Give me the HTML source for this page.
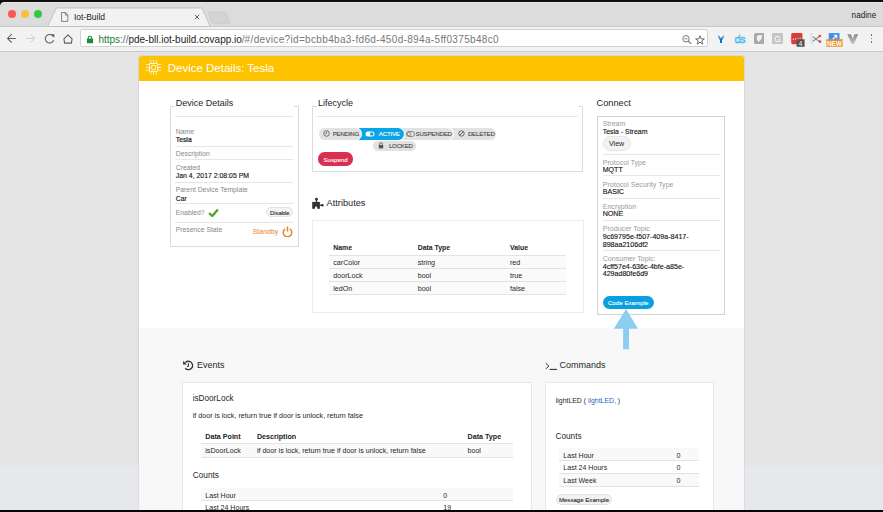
<!DOCTYPE html><html><head><meta charset="utf-8"><style>
html,body{margin:0;padding:0;width:883px;height:512px;overflow:hidden;background:#e4e4e4}
body{position:relative;font-family:"Liberation Sans",sans-serif}
body>div,body>svg{position:absolute}
.t{white-space:nowrap}
</style></head><body>
<div style="left:0px;top:0px;width:883px;height:512px;background:#e4e4e4"></div>
<div style="left:0px;top:0px;width:883px;height:27px;background:#dcdcdc"></div>
<div style="left:0px;top:0px;width:883px;height:1.7px;background:#0f0f0f"></div>
<div style="left:0px;top:1.7px;width:883px;height:1.4px;background:#e6e6e6"></div>
<div style="left:0px;top:1.7px;width:3px;height:3px;background:radial-gradient(circle at 3px 3px, transparent 2.2px, #0f0f0f 3px)"></div>
<div style="left:7.6px;top:10.200000000000001px;width:8.2px;height:8.2px;border-radius:50%;background:#fc5753"></div>
<div style="left:20.9px;top:10.200000000000001px;width:8.2px;height:8.2px;border-radius:50%;background:#fdbc40"></div>
<div style="left:34.0px;top:10.200000000000001px;width:8.2px;height:8.2px;border-radius:50%;background:#33c748"></div>
<svg style="left:0px;top:0px" width="883" height="30" viewBox="0 0 883 30"><path d="M47.6 26.5 L56.2 8.5 Q56.8 8 57.5 8 L201 8 Q201.8 8 202.2 8.6 L210.3 26.5 Z" fill="#f2f2f2" stroke="#b9b9b9" stroke-width="0.8"/><path d="M209.5 26.4 L883 26.4" stroke="#c3c3c3" stroke-width="0.8"/><path d="M0 26.4 L47.8 26.4" stroke="#c3c3c3" stroke-width="0.8"/><path d="M208.3 12.6 Q208 12.2 208.8 12.2 L225 12.2 Q226 12.2 226.4 13 L229.8 22.6 Q230 23.7 229 23.7 L213 23.7 Q212.2 23.7 211.8 23 Z" fill="#d3d3d3" stroke="#c6c6c6" stroke-width="0.6"/></svg>
<div style="left:0px;top:26.8px;width:883px;height:24.2px;background:#f2f2f2"></div>
<div style="left:0px;top:51px;width:883px;height:1px;background:#c9c9c9"></div>
<svg style="left:60.5px;top:12px" width="8" height="10" viewBox="0 0 8 10"><path d="M0.5 0.5 H4.5 L6.8 2.8 V9.4 H0.5 Z M4.3 0.5 V3 H6.8" fill="none" stroke="#707070" stroke-width="0.85"/></svg>
<div class="t" style="left:73.9px;top:13.00px;font-size:8.5px;line-height:8.5px;color:#222;font-weight:400;">Iot-Build</div>
<svg style="left:193.5px;top:14px" width="6" height="6" viewBox="0 0 6 6"><path d="M0.8 0.8 L5.2 5.2 M5.2 0.8 L0.8 5.2" stroke="#5a5a5a" stroke-width="0.95"/></svg>
<svg style="left:6px;top:33px" width="11" height="11" viewBox="0 0 11 11"><path d="M1.5 5.4 H9.8 M5.7 1.1 L1.5 5.4 L5.7 9.7" fill="none" stroke="#5e5e5e" stroke-width="1.05"/></svg>
<svg style="left:25px;top:33px" width="11" height="11" viewBox="0 0 11 11"><path d="M1 5.4 H9.6 M5.3 1.1 L9.6 5.4 L5.3 9.7" fill="none" stroke="#cfcfcf" stroke-width="1"/></svg>
<svg style="left:44px;top:33px" width="12" height="12" viewBox="0 0 12 12"><path d="M9.3 3.6 A4.3 4.3 0 1 0 9.6 7.2" fill="none" stroke="#5c5c5c" stroke-width="1.05"/><path d="M6.9 1.3 L10.3 1.3 L10.3 4.7 Z" fill="#5c5c5c"/></svg>
<svg style="left:62px;top:33px" width="12" height="12" viewBox="0 0 12 12"><path d="M6 1.8 L10.1 5.9 L9.4 10.1 H2.6 L1.9 5.9 Z" fill="none" stroke="#5c5c5c" stroke-width="1.05" stroke-linejoin="round"/></svg>
<div style="left:80px;top:29px;width:628px;height:18px;background:#fff;border:1px solid #d0d0d0;border-radius:2.5px;box-sizing:border-box"></div>
<svg style="left:85.5px;top:34.5px" width="8" height="9" viewBox="0 0 8 9"><path d="M2.3 3.8 V2.9 A1.7 1.7 0 0 1 5.7 2.9 V3.8" fill="none" stroke="#1e8a3c" stroke-width="1.1"/><rect x="0.9" y="3.6" width="6.2" height="4.6" rx="0.6" fill="#1e8a3c"/></svg>
<div class="t" style="left:98.4px;top:35.00px;font-size:10px;line-height:10px;color:#333;font-weight:400;"><span style="color:#188038">https</span><span style="color:#666">://</span><span style="color:#222">pde-bll.iot-build.covapp.io</span><span style="color:#777">/</span><span style="color:#777;letter-spacing:0.34px">#/device?id=bcbb4ba3-fd6d-450d-894a-5ff0375b48c0</span></div>
<svg style="left:681.5px;top:35px" width="10" height="9" viewBox="0 0 10 9"><circle cx="4" cy="3.8" r="3.2" fill="none" stroke="#6a6a6a" stroke-width="0.9"/><path d="M2.4 3.8 H5.6" stroke="#6a6a6a" stroke-width="0.8"/><path d="M6.3 6.1 L9.2 8.8" stroke="#6a6a6a" stroke-width="1.1"/></svg>
<svg style="left:695px;top:34.5px" width="10" height="10" viewBox="0 0 10 10"><path d="M5 0.8 L6.2 3.9 L9.4 3.9 L6.8 5.9 L7.8 9.1 L5 7.2 L2.2 9.1 L3.2 5.9 L0.6 3.9 L3.8 3.9 Z" fill="none" stroke="#5a5a5a" stroke-width="0.9" stroke-linejoin="round"/></svg>
<div class="t" style="left:851.6px;top:12.00px;font-size:8.2px;line-height:8.2px;color:#222;font-weight:400;">nadine</div>
<svg style="left:716px;top:33.5px" width="10" height="10" viewBox="0 0 10 10"><path d="M0.5 1.2 Q5 -0.3 9.5 1.2 L6.4 6.8 V9.6 H3.6 V6.8 Z" fill="#fff"/><defs><linearGradient id="gvb" x1="0" y1="0" x2="0" y2="1"><stop offset="0" stop-color="#7cc4f4"/><stop offset="0.45" stop-color="#1a73c8"/><stop offset="1" stop-color="#0d4f9a"/></linearGradient></defs><path d="M1.2 1.6 L3.6 1.6 L5 4.6 L6.4 1.6 L8.8 1.6 L5.9 6.6 V9 H4.1 V6.6 Z" fill="url(#gvb)"/></svg>
<svg style="left:734px;top:33.5px" width="12" height="10" viewBox="0 0 12 10"><text x="0.4" y="9" font-family="Liberation Sans" font-size="11" letter-spacing="-0.6" fill="none" stroke="#22b0ee" stroke-width="0.55">ds</text></svg>
<svg style="left:753.5px;top:33px" width="10.5" height="11" viewBox="0 0 10.5 11"><rect x="0" y="0" width="10.5" height="11" rx="1.6" fill="#a9a9a9"/><path d="M2.6 3.4 Q5.6 1.4 8.2 2.3 Q8.3 6.6 4.6 9.1 Q2.4 7 2.6 3.4 Z" fill="#f0f0f0"/></svg>
<svg style="left:772px;top:33px" width="11" height="11" viewBox="0 0 11 11"><rect x="0" y="0" width="11" height="11" rx="0.8" fill="#c5c5c5"/><text x="5.5" y="8.9" font-family="Liberation Sans" font-size="8.6" fill="#fff" text-anchor="middle">G</text></svg>
<svg style="left:790.5px;top:33px" width="15" height="14.5" viewBox="0 0 15 14.5"><rect x="0.2" y="0" width="11.2" height="11.2" rx="1.4" fill="#e0393a"/><path d="M2 6.4 H3 M4.2 5.8 H5.2 M6.4 6.2 H7.4 M8.6 5.4 H9.6" stroke="#fff" stroke-width="1.2"/><rect x="5.6" y="6.3" width="8" height="7.5" fill="#545454"/><text x="9.6" y="12.6" font-family="Liberation Sans" font-size="6.4" fill="#fff" text-anchor="middle">4</text></svg>
<svg style="left:809.5px;top:33px" width="12" height="11" viewBox="0 0 12 11"><path d="M3.6 0.6 H1.1 V10.4 H3.6" fill="none" stroke="#d3e3ec" stroke-width="1.3"/><path d="M2.6 3.6 L9.2 8.4 M2.6 8.4 L9.2 3.6" stroke="#7c7c7c" stroke-width="1.1"/><circle cx="9.8" cy="3" r="1.3" fill="#c24a48"/><circle cx="10" cy="8.6" r="1.3" fill="#c24a48"/></svg>
<svg style="left:825.5px;top:33px" width="17" height="14" viewBox="0 0 17 14"><rect x="2.7" y="0.1" width="10.8" height="7" fill="#3e8eec"/><path d="M6.5 6.5 L10.5 2.5 M7.8 2.3 H10.7 V5.2" fill="none" stroke="#fff" stroke-width="1.1"/><rect x="0.3" y="6.2" width="16.3" height="7.6" fill="#e8912d"/><text x="8.45" y="12.5" font-family="Liberation Sans" font-size="6.4" font-weight="700" fill="#fff" text-anchor="middle">NEW</text></svg>
<svg style="left:847px;top:33.5px" width="11.5" height="10.5" viewBox="0 0 11.5 10.5"><defs><linearGradient id="gv" x1="0" y1="0" x2="0" y2="1"><stop offset="0" stop-color="#8a8a8a"/><stop offset="1" stop-color="#c8c8c8"/></linearGradient></defs><path d="M0.3 0.3 H4 L5.75 4.5 L7.5 0.3 H11.2 L6.8 10.2 H4.7 Z" fill="url(#gv)"/></svg>
<div style="left:870.6px;top:33.949999999999996px;width:1.7px;height:1.7px;border-radius:50%;background:#555"></div>
<div style="left:870.6px;top:37.65px;width:1.7px;height:1.7px;border-radius:50%;background:#555"></div>
<div style="left:870.6px;top:41.449999999999996px;width:1.7px;height:1.7px;border-radius:50%;background:#555"></div>
<div style="left:0px;top:465px;width:139px;height:47px;background:#e7e8eb"></div>
<div style="left:744px;top:465px;width:139px;height:47px;background:#e7e8eb"></div>
<div style="left:139px;top:55.5px;width:605px;height:460px;background:#f8f8f8;border-radius:3px 3px 0 0;box-shadow:0 0 1.5px rgba(0,0,0,0.28)"></div>
<div style="left:139px;top:80.5px;width:605px;height:247px;background:#fff"></div>
<div style="left:139px;top:55.5px;width:605px;height:25px;background:#fdc300;border-radius:3px 3px 0 0"></div>
<svg style="left:144px;top:57px" width="20" height="21" viewBox="0 0 20 21"><rect x="5.5" y="6.5" width="8.2" height="7.9" rx="0.6" fill="none" stroke="#fff" stroke-width="0.9"/><circle cx="9.6" cy="10.45" r="2.3" fill="none" stroke="#fff" stroke-width="0.9"/><path d="M6.8 2.9 V6.1 M9.5 2.9 V6.1 M12.3 2.9 V6.1 M6.8 14.8 V18 M9.5 14.8 V18 M12.3 14.8 V18 M1.8 7.6 H5.1 M1.8 10.5 H5.1 M1.8 13.3 H5.1 M14.1 7.6 H17.4 M14.1 10.5 H17.4 M14.1 13.3 H17.4" stroke="#fff" stroke-width="0.8" opacity="0.9"/></svg>
<div class="t" style="left:167.7px;top:63.00px;font-size:11.5px;line-height:11.5px;color:#fff;font-weight:400;">Device Details: Tesla</div>
<div class="t" style="left:175.8px;top:99.00px;font-size:9px;line-height:9px;color:#262626;font-weight:400;">Device Details</div>
<div style="left:170px;top:107px;width:129px;height:140px;border:1px solid #dcdcdc;border-top:none;box-sizing:border-box"></div>
<div style="left:170px;top:106px;width:5px;height:1px;background:#dcdcdc"></div>
<div style="left:294px;top:106px;width:5px;height:1px;background:#dcdcdc"></div>
<div style="left:175px;top:116px;width:118px;height:1px;background:#e6e6e6"></div>
<div style="left:175px;top:146px;width:118px;height:1px;background:#e6e6e6"></div>
<div style="left:175px;top:159px;width:118px;height:1px;background:#e6e6e6"></div>
<div style="left:175px;top:182px;width:118px;height:1px;background:#e6e6e6"></div>
<div style="left:175px;top:203px;width:118px;height:1px;background:#e6e6e6"></div>
<div style="left:175px;top:222px;width:118px;height:1px;background:#e6e6e6"></div>
<div class="t" style="left:175.8px;top:129.00px;font-size:6.8px;line-height:6.8px;color:#888;font-weight:400;">Name</div>
<div class="t" style="left:175.8px;top:137.00px;font-size:6.8px;line-height:6.8px;color:#111;font-weight:400;-webkit-text-stroke:0.2px #1a1a1a">Tesla</div>
<div class="t" style="left:175.8px;top:151.00px;font-size:6.8px;line-height:6.8px;color:#888;font-weight:400;">Description</div>
<div class="t" style="left:175.8px;top:165.00px;font-size:6.8px;line-height:6.8px;color:#888;font-weight:400;">Created</div>
<div class="t" style="left:175.8px;top:173.00px;font-size:6.9px;line-height:6.9px;color:#111;font-weight:400;-webkit-text-stroke:0.12px #111">Jan 4, 2017 2:08:05 PM</div>
<div class="t" style="left:175.8px;top:187.00px;font-size:6.8px;line-height:6.8px;color:#888;font-weight:400;">Parent Device Template</div>
<div class="t" style="left:175.8px;top:196.00px;font-size:6.9px;line-height:6.9px;color:#111;font-weight:400;-webkit-text-stroke:0.12px #111">Car</div>
<div class="t" style="left:175.8px;top:210.00px;font-size:6.8px;line-height:6.8px;color:#888;font-weight:400;">Enabled?</div>
<svg style="left:207.5px;top:207.8px" width="11" height="9" viewBox="0 0 11 9"><path d="M1.1 5 L4.3 8 L9.9 1.6" fill="none" stroke="#5a9e1c" stroke-width="2.3"/></svg>
<div style="left:265.5px;top:207.4px;width:27px;height:9.8px;background:#f3f3f3;border:0.8px solid #e2e2e2;border-radius:5px;box-sizing:border-box"></div>
<div class="t" style="left:269.9px;top:211.00px;font-size:5.9px;line-height:5.9px;color:#262626;font-weight:400;-webkit-text-stroke:0.1px #262626">Disable</div>
<div class="t" style="left:175.8px;top:227.00px;font-size:6.8px;line-height:6.8px;color:#888;font-weight:400;">Presence State</div>
<div class="t" style="left:252.7px;top:228.00px;font-size:7px;line-height:7px;color:#e8832a;font-weight:400;">Standby</div>
<svg style="left:281.5px;top:225.5px" width="11" height="11" viewBox="0 0 11 11"><path d="M3.2 2.8 A4.3 4.3 0 1 0 7.8 2.8" fill="none" stroke="#e8832a" stroke-width="1.5"/><path d="M5.5 0.5 V5.6" stroke="#e8832a" stroke-width="1.5"/></svg>
<div class="t" style="left:318.1px;top:99.00px;font-size:9px;line-height:9px;color:#262626;font-weight:400;">Lifecycle</div>
<div style="left:312px;top:107px;width:271px;height:65px;border:1px solid #dcdcdc;border-top:none;box-sizing:border-box"></div>
<div style="left:312px;top:106px;width:5px;height:1px;background:#dcdcdc"></div>
<div style="left:578px;top:106px;width:5px;height:1px;background:#dcdcdc"></div>
<div style="left:317px;top:116px;width:261px;height:1px;background:#e6e6e6"></div>
<div style="left:449px;top:126.8px;width:48px;height:13.8px;background:#e2e2e2;border-radius:0 6.9px 6.9px 0;border:1px solid #fff;border-left:none;box-sizing:border-box"></div>
<div style="left:400px;top:126.8px;width:53.5px;height:13.8px;background:#e2e2e2;border-radius:0 6.9px 6.9px 0;border:1px solid #fff;border-left:none;box-sizing:border-box"></div>
<div style="left:357.5px;top:126.8px;width:47.5px;height:13.8px;background:#0aa5e6;border-radius:0 6.9px 6.9px 0;border:1px solid #fff;border-left:none;box-sizing:border-box"></div>
<div style="left:318px;top:126.8px;width:44px;height:13.8px;background:#e2e2e2;border-radius:6.9px;border:1px solid #fff;box-sizing:border-box"></div>
<div style="left:372px;top:140px;width:44.5px;height:11.5px;background:#e2e2e2;border-radius:6.9px;border:1px solid #fff;box-sizing:border-box"></div>
<div class="t" style="left:332.7px;top:131.00px;font-size:6.2px;line-height:6.2px;color:#4a4a4a;font-weight:400;letter-spacing:-0.25px;-webkit-text-stroke:0.12px #4a4a4a">PENDING</div>
<div class="t" style="left:378.8px;top:131.00px;font-size:6.2px;line-height:6.2px;color:#fff;font-weight:400;letter-spacing:-0.25px;-webkit-text-stroke:0.12px #fff">ACTIVE</div>
<div class="t" style="left:415.5px;top:131.00px;font-size:6.2px;line-height:6.2px;color:#4a4a4a;font-weight:400;letter-spacing:-0.25px;-webkit-text-stroke:0.12px #4a4a4a">SUSPENDED</div>
<div class="t" style="left:467.9px;top:131.00px;font-size:6.2px;line-height:6.2px;color:#4a4a4a;font-weight:400;letter-spacing:-0.25px;-webkit-text-stroke:0.12px #4a4a4a">DELETED</div>
<div class="t" style="left:388.9px;top:143.00px;font-size:6.2px;line-height:6.2px;color:#4a4a4a;font-weight:400;letter-spacing:-0.25px;-webkit-text-stroke:0.12px #4a4a4a">LOCKED</div>
<svg style="left:322.5px;top:129.8px" width="7" height="7" viewBox="0 0 7 7"><circle cx="3.5" cy="3.5" r="2.8" fill="none" stroke="#555" stroke-width="0.8"/><path d="M3.5 1.8 V3.6 H2.2" fill="none" stroke="#555" stroke-width="0.7"/></svg>
<svg style="left:365px;top:130.6px" width="10" height="6" viewBox="0 0 10 6"><rect x="0.5" y="0.5" width="9" height="5" rx="2.5" fill="#fff"/><circle cx="6.8" cy="3" r="1.8" fill="#0aa5e6"/></svg>
<svg style="left:405.8px;top:130.6px" width="9" height="6" viewBox="0 0 9 6"><rect x="0.5" y="0.5" width="8" height="5" rx="2.5" fill="none" stroke="#666" stroke-width="0.7"/><circle cx="3" cy="3" r="1.8" fill="none" stroke="#666" stroke-width="0.6"/></svg>
<svg style="left:457.8px;top:129.8px" width="7" height="7" viewBox="0 0 7 7"><circle cx="3.5" cy="3.5" r="2.7" fill="none" stroke="#555" stroke-width="0.9"/><path d="M1.8 5.2 L5.2 1.8" stroke="#555" stroke-width="0.9"/></svg>
<svg style="left:377.5px;top:142px" width="6" height="7" viewBox="0 0 6 7"><path d="M1.5 3 V2.2 A1.5 1.5 0 0 1 4.5 2.2 V3" fill="none" stroke="#555" stroke-width="0.8"/><rect x="0.8" y="3" width="4.4" height="3.4" fill="#555"/></svg>
<div style="left:318px;top:152.4px;width:35.1px;height:13.3px;background:#d8304e;border-radius:6.65px"></div>
<div class="t" style="left:323.5px;top:157.00px;font-size:6.1px;line-height:6.1px;color:#fff;font-weight:400;-webkit-text-stroke:0.1px #fff">Suspend</div>
<svg style="left:308px;top:194px" width="24" height="18" viewBox="0 0 24 18"><rect x="4.2" y="7.9" width="7.7" height="6.9" fill="#333"/><rect x="7.8" y="5.5" width="1.3" height="3" fill="#333"/><circle cx="8.45" cy="5.2" r="1.4" fill="#333"/><rect x="11.5" y="10.6" width="2.4" height="1.3" fill="#333"/><circle cx="14.4" cy="11.25" r="1.2" fill="#333"/><ellipse cx="8.1" cy="14.9" rx="1.25" ry="2.7" fill="#fff"/></svg>
<div class="t" style="left:326.6px;top:199.00px;font-size:9.2px;line-height:9.2px;color:#262626;font-weight:400;">Attributes</div>
<div style="left:312px;top:220px;width:272px;height:93px;border:1px solid #ebebeb;box-sizing:border-box"></div>
<div class="t" style="left:333.3px;top:245.00px;font-size:6.9px;line-height:6.9px;color:#222;font-weight:700;">Name</div>
<div class="t" style="left:417.7px;top:245.00px;font-size:6.9px;line-height:6.9px;color:#222;font-weight:700;">Data Type</div>
<div class="t" style="left:510px;top:245.00px;font-size:6.9px;line-height:6.9px;color:#222;font-weight:700;">Value</div>
<div style="left:328.6px;top:255px;width:237.6px;height:39px;background:#fafafa"></div>
<div style="left:328.6px;top:255px;width:237.6px;height:1px;background:#e3e3e3"></div>
<div style="left:328.6px;top:268px;width:237.6px;height:1px;background:#e3e3e3"></div>
<div style="left:328.6px;top:281px;width:237.6px;height:1px;background:#e3e3e3"></div>
<div style="left:328.6px;top:294px;width:237.6px;height:1px;background:#e3e3e3"></div>
<div class="t" style="left:333.3px;top:260.00px;font-size:7.1px;line-height:7.1px;color:#262626;font-weight:400;">carColor</div>
<div class="t" style="left:417.7px;top:260.00px;font-size:7.1px;line-height:7.1px;color:#262626;font-weight:400;">string</div>
<div class="t" style="left:510px;top:260.00px;font-size:7.1px;line-height:7.1px;color:#262626;font-weight:400;">red</div>
<div class="t" style="left:333.3px;top:273.00px;font-size:7.1px;line-height:7.1px;color:#262626;font-weight:400;">doorLock</div>
<div class="t" style="left:417.7px;top:273.00px;font-size:7.1px;line-height:7.1px;color:#262626;font-weight:400;">bool</div>
<div class="t" style="left:510px;top:273.00px;font-size:7.1px;line-height:7.1px;color:#262626;font-weight:400;">true</div>
<div class="t" style="left:333.3px;top:286.00px;font-size:7.1px;line-height:7.1px;color:#262626;font-weight:400;">ledOn</div>
<div class="t" style="left:417.7px;top:286.00px;font-size:7.1px;line-height:7.1px;color:#262626;font-weight:400;">bool</div>
<div class="t" style="left:510px;top:286.00px;font-size:7.1px;line-height:7.1px;color:#262626;font-weight:400;">false</div>
<div class="t" style="left:596.6px;top:99.00px;font-size:9.2px;line-height:9.2px;color:#262626;font-weight:400;">Connect</div>
<div style="left:597px;top:116px;width:128px;height:199px;border:1px solid #d2d2d2;box-sizing:border-box"></div>
<div class="t" style="left:602.7px;top:120.00px;font-size:7px;line-height:7px;color:#9a9a9a;font-weight:400;">Stream</div>
<div class="t" style="left:602.7px;top:129.00px;font-size:6.95px;line-height:6.95px;color:#111;font-weight:400;-webkit-text-stroke:0.12px #111">Tesla - Stream</div>
<div style="left:602.7px;top:136.3px;width:28.2px;height:14.6px;background:#f2f2f2;border:0.8px solid #e6e6e6;border-radius:7.3px;box-sizing:border-box"></div>
<div class="t" style="left:609px;top:141.00px;font-size:7.1px;line-height:7.1px;color:#262626;font-weight:400;">View</div>
<div style="left:602.7px;top:154px;width:117.6px;height:1px;background:#e6e6e6"></div>
<div style="left:602.7px;top:175px;width:117.6px;height:1px;background:#e6e6e6"></div>
<div style="left:602.7px;top:198px;width:117.6px;height:1px;background:#e6e6e6"></div>
<div style="left:602.7px;top:220px;width:117.6px;height:1px;background:#e6e6e6"></div>
<div style="left:602.7px;top:250px;width:117.6px;height:1px;background:#e6e6e6"></div>
<div class="t" style="left:602.7px;top:160.00px;font-size:7.1px;line-height:7.1px;color:#9a9a9a;font-weight:400;">Protocol Type</div>
<div class="t" style="left:602.7px;top:167.00px;font-size:7.1px;line-height:7.1px;color:#111;font-weight:400;-webkit-text-stroke:0.12px #111">MQTT</div>
<div class="t" style="left:602.7px;top:182.00px;font-size:7.1px;line-height:7.1px;color:#9a9a9a;font-weight:400;">Protocol Security Type</div>
<div class="t" style="left:602.7px;top:189.00px;font-size:7.1px;line-height:7.1px;color:#111;font-weight:400;-webkit-text-stroke:0.12px #111">BASIC</div>
<div class="t" style="left:602.7px;top:204.00px;font-size:7.1px;line-height:7.1px;color:#9a9a9a;font-weight:400;">Encryption</div>
<div class="t" style="left:602.7px;top:211.00px;font-size:7.1px;line-height:7.1px;color:#111;font-weight:400;-webkit-text-stroke:0.12px #111">NONE</div>
<div class="t" style="left:602.7px;top:226.00px;font-size:7.1px;line-height:7.1px;color:#9a9a9a;font-weight:400;">Producer Topic</div>
<div class="t" style="left:602.7px;top:234.00px;font-size:7.1px;line-height:7.1px;color:#111;font-weight:400;-webkit-text-stroke:0.12px #111">9c69795e-f507-409a-8417-</div>
<div class="t" style="left:602.7px;top:256.00px;font-size:7.1px;line-height:7.1px;color:#9a9a9a;font-weight:400;">Consumer Topic:</div>
<div class="t" style="left:602.7px;top:264.00px;font-size:7.1px;line-height:7.1px;color:#111;font-weight:400;-webkit-text-stroke:0.12px #111">4cff57e4-636c-4bfe-a85e-</div>
<div class="t" style="left:602.7px;top:242.00px;font-size:7.1px;line-height:7.1px;color:#111;font-weight:400;-webkit-text-stroke:0.12px #111">898aa2106df2</div>
<div class="t" style="left:602.7px;top:271.00px;font-size:7.1px;line-height:7.1px;color:#111;font-weight:400;-webkit-text-stroke:0.12px #111">429ad80fe6d9</div>
<div style="left:602.6px;top:295.5px;width:51.3px;height:13.4px;background:#0aa0e0;border-radius:6.7px"></div>
<div class="t" style="left:607.9px;top:300.00px;font-size:6.2px;line-height:6.2px;color:#fff;font-weight:400;-webkit-text-stroke:0.1px #fff">Code Example</div>
<svg style="left:612px;top:308px" width="28" height="42" viewBox="0 0 28 42"><path d="M14 1 L26.1 20.7 L17 20.7 L17 41.2 L11.1 41.2 L11.1 20.7 L1.8 20.7 Z" fill="#8dcdf0"/></svg>
<svg style="left:180px;top:356px" width="20" height="18" viewBox="0 0 20 18"><path d="M5.43 6.53 A4.2 4.2 0 1 1 5.2 12.2" fill="none" stroke="#333" stroke-width="1.35"/><path d="M3.1 4.8 L3.1 8.5 L6.8 8.5 Z" fill="#333"/><path d="M8.4 7.3 V10.2 L7.1 10.6" fill="none" stroke="#333" stroke-width="1.1"/></svg>
<div class="t" style="left:196.9px;top:361.00px;font-size:9px;line-height:9px;color:#262626;font-weight:400;">Events</div>
<div style="left:182px;top:382px;width:350px;height:140px;background:#fff;border:1px solid #e8e8e8;box-sizing:border-box"></div>
<div class="t" style="left:192.7px;top:395.00px;font-size:8.2px;line-height:8.2px;color:#262626;font-weight:400;">isDoorLock</div>
<div class="t" style="left:192.7px;top:413.00px;font-size:7.16px;line-height:7.16px;color:#262626;font-weight:400;">if door is lock, return true if door is unlock, return false</div>
<div class="t" style="left:205.3px;top:434.00px;font-size:7.15px;line-height:7.15px;color:#222;font-weight:700;">Data Point</div>
<div class="t" style="left:256.9px;top:434.00px;font-size:7.15px;line-height:7.15px;color:#222;font-weight:700;">Description</div>
<div class="t" style="left:467.5px;top:434.00px;font-size:7.15px;line-height:7.15px;color:#222;font-weight:700;">Data Type</div>
<div style="left:201.2px;top:442.5px;width:311.5px;height:14.5px;background:#f9f9f9"></div>
<div style="left:201.2px;top:442.5px;width:311.5px;height:1px;background:#e3e3e3"></div>
<div style="left:201.2px;top:456.7px;width:311.5px;height:1px;background:#e3e3e3"></div>
<div class="t" style="left:205.3px;top:448.00px;font-size:7.1px;line-height:7.1px;color:#262626;font-weight:400;">isDoorLock</div>
<div class="t" style="left:256.9px;top:448.00px;font-size:7.1px;line-height:7.1px;color:#262626;font-weight:400;">if door is lock, return true if door is unlock, return false</div>
<div class="t" style="left:467.5px;top:448.00px;font-size:7.1px;line-height:7.1px;color:#262626;font-weight:400;">bool</div>
<div class="t" style="left:192.7px;top:471.00px;font-size:8.3px;line-height:8.3px;color:#262626;font-weight:400;">Counts</div>
<div style="left:201.2px;top:488px;width:311.5px;height:12.6px;background:#f9f9f9"></div>
<div style="left:201.2px;top:500px;width:311.5px;height:1px;background:#e3e3e3"></div>
<div class="t" style="left:205.3px;top:492.00px;font-size:7.05px;line-height:7.05px;color:#262626;font-weight:400;">Last Hour</div>
<div class="t" style="left:443.3px;top:492.00px;font-size:7.05px;line-height:7.05px;color:#262626;font-weight:400;">0</div>
<div class="t" style="left:205.3px;top:504.00px;font-size:7.05px;line-height:7.05px;color:#262626;font-weight:400;">Last 24 Hours</div>
<div class="t" style="left:443.3px;top:504.00px;font-size:7.05px;line-height:7.05px;color:#262626;font-weight:400;">19</div>
<svg style="left:542px;top:356px" width="24" height="18" viewBox="0 0 24 18"><path d="M3.8 7.2 L6.9 10.1 L3.8 12.9" fill="none" stroke="#333" stroke-width="1.0"/><path d="M7.6 13.4 H15" stroke="#333" stroke-width="1.1"/></svg>
<div class="t" style="left:559.5px;top:361.00px;font-size:9px;line-height:9px;color:#262626;font-weight:400;">Commands</div>
<div style="left:545px;top:382px;width:169px;height:140px;background:#fff;border:1px solid #e8e8e8;box-sizing:border-box"></div>
<div class="t" style="left:555.8px;top:398.00px;font-size:6.9px;line-height:6.9px;color:#262626;font-weight:400;">lightLED ( <span style="color:#2466c4">lightLED,</span> )</div>
<div class="t" style="left:555.6px;top:433.00px;font-size:8.2px;line-height:8.2px;color:#262626;font-weight:400;">Counts</div>
<div style="left:558.9px;top:448px;width:140px;height:12px;background:#f9f9f9"></div>
<div style="left:558.9px;top:474px;width:140px;height:12px;background:#f9f9f9"></div>
<div style="left:558.9px;top:460px;width:140px;height:1px;background:#e3e3e3"></div>
<div style="left:558.9px;top:473px;width:140px;height:1px;background:#e3e3e3"></div>
<div style="left:558.9px;top:486px;width:140px;height:1px;background:#e3e3e3"></div>
<div class="t" style="left:563.3px;top:452.00px;font-size:7.05px;line-height:7.05px;color:#262626;font-weight:400;">Last Hour</div>
<div class="t" style="left:676.5px;top:452.00px;font-size:7.05px;line-height:7.05px;color:#262626;font-weight:400;">0</div>
<div class="t" style="left:563.3px;top:464.00px;font-size:7.05px;line-height:7.05px;color:#262626;font-weight:400;">Last 24 Hours</div>
<div class="t" style="left:676.5px;top:464.00px;font-size:7.05px;line-height:7.05px;color:#262626;font-weight:400;">0</div>
<div class="t" style="left:563.3px;top:477.00px;font-size:7.05px;line-height:7.05px;color:#262626;font-weight:400;">Last Week</div>
<div class="t" style="left:676.5px;top:477.00px;font-size:7.05px;line-height:7.05px;color:#262626;font-weight:400;">0</div>
<div style="left:555.6px;top:494.4px;width:56.7px;height:10.4px;background:#f2f2f2;border:0.8px solid #e3e3e3;border-radius:5.2px;box-sizing:border-box"></div>
<div class="t" style="left:558.9px;top:497.00px;font-size:6.1px;line-height:6.1px;color:#262626;font-weight:400;-webkit-text-stroke:0.1px #262626">Message Example</div>
<div style="left:0px;top:509.8px;width:883px;height:3px;background:#050505"></div>
</body></html>
